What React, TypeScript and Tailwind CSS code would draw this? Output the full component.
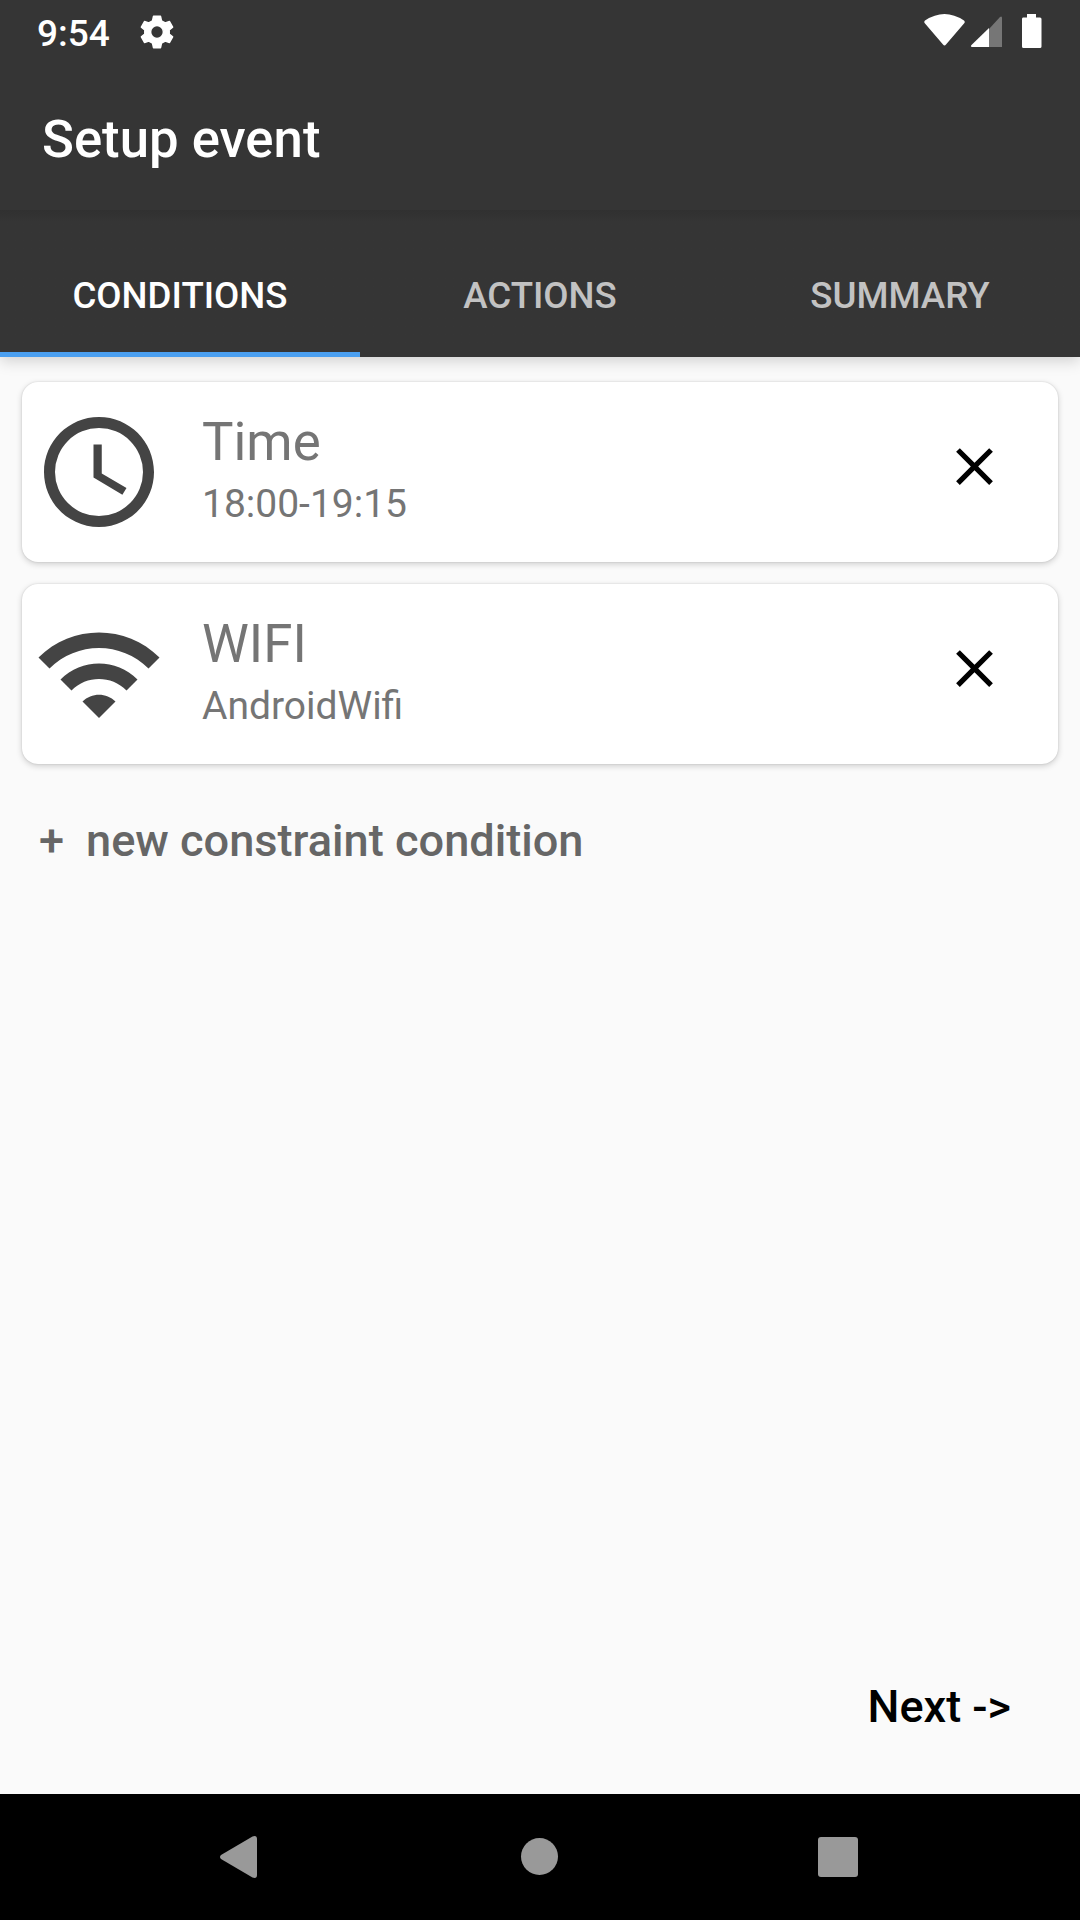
import React from "react";

function CloseIcon() {
  return (
    <svg className="mr-[52px] mt-[53px] size-[63px]" viewBox="0 0 24 24">
      <path d="M19 6.41L17.59 5 12 10.59 6.41 5 5 6.41 10.59 12 5 17.59 6.41 19 12 13.41 17.59 19 19 17.59 13.41 12z" fill="#000" />
    </svg>
  );
}

function Card({ title, detail, icon }: { title: string; detail: string; icon: React.ReactNode }) {
  return (
    <div className="flex h-[180px] items-start rounded-[16px] bg-white shadow-[0_2px_6px_rgba(0,0,0,0.18),0_0_2px_rgba(0,0,0,0.14)]">
      <div className="ml-[11px] mt-[24px] size-[132px] shrink-0">{icon}</div>
      <div className="ml-[37px] mt-[30px] flex-1 text-[#757575]">
        <div className="text-[52.8px] leading-[61px]">{title}</div>
        <div className="mt-[8px] text-[39px] leading-[46px]">{detail}</div>
      </div>
      <CloseIcon />
    </div>
  );
}

export default function App() {
  return (
    <div className="flex h-[1920px] w-[1080px] flex-col bg-[#fafafa] font-[Roboto,sans-serif]">
      <header className="h-[357px] bg-[#353535] text-white shadow-[0_4px_14px_rgba(0,0,0,0.17)]">
        <div className="flex h-[63px] items-center pl-[37px] pr-[38px]">
          <span className="pt-[3px] text-[37px] font-medium leading-[63px]">9:54</span>
          <svg className="ml-[30px] size-[34px]" viewBox="-17 -17 34 34" fill="#fff" stroke="#fff" strokeWidth="1.500" strokeLinejoin="round">
            <path fillRule="evenodd" d="M-3.500-15.700H3.500L4.500-11L8.200-9L12.500-10.500L15.600-4.800L12.200-2V2L15.600 4.800L12.500 10.500L8.200 9L4.500 11L3.500 15.700H-3.500L-4.500 11L-8.200 9L-12.500 10.500L-15.600 4.800L-12.200 2V-2L-15.600-4.800L-12.500-10.500L-8.200-9L-4.500-11ZM0-6.400A6.400 6.400 0 1 0 0 6.400A6.400 6.400 0 1 0 0-6.400Z" />
          </svg>
          <svg className="mb-px ml-auto h-[34px] w-[118px]" viewBox="0 0 118 34">
            <path d="M1 6.500Q20.500-6.500 40 6.500Q41.500 8 40 9.500L22 30.500Q20.500 32.500 19 30.500L1 9.500Q-.5 8 1 6.500Z" fill="#fff" />
            <path d="M65 15L76 3Q78 1.500 78 4V33H65Z" fill="#767676" />
            <path d="M65 14V33H48Q46 32.500 47.500 31Z" fill="#fff" />
            <path d="M99 3.500H103V0H112V3.500H116Q117.500 3.500 117.500 5V32.500Q117.500 34 116 34H99.500Q98 34 98 32.500V5Q98 3.500 99 3.500Z" fill="#fff" />
          </svg>
        </div>
        <div className="flex h-[147px] items-center pl-[42px] pt-[5px] text-[52.7px] font-medium leading-[78px]">Setup event</div>
        <nav className="grid h-[147px] grid-cols-3 bg-linear-to-b from-[#303030] to-[#353535] to-[12px] text-center text-[36.65px] font-medium">
          <div className="border-b-[5px] border-[#4a9ff0] pt-[59px]">CONDITIONS</div>
          <div className="pt-[59px] text-[#c2c2c2]">ACTIONS</div>
          <div className="pt-[59px] text-[#c2c2c2]">SUMMARY</div>
        </nav>
      </header>
      <main className="flex flex-1 flex-col px-[22px] pt-[25px]">
        <div className="flex flex-col gap-[22px]">
          <Card title="Time" detail="18:00-19:15" icon={
            <svg viewBox="0 0 24 24" fill="#444"><path d="M11.99 2C6.47 2 2 6.48 2 12s4.47 10 9.99 10C17.52 22 22 17.52 22 12S17.52 2 11.99 2zM12 20a8 8 0 1 1 0-16 8 8 0 0 1 0 16zm.5-13H11v6l5.25 3.15.75-1.23-4.5-2.67z" /></svg>
          } />
          <Card title="WIFI" detail="AndroidWifi" icon={
            <svg viewBox="0 0 24 24" fill="#444"><path d="M1 9l2 2c4.97-4.97 13.03-4.97 18 0l2-2C16.93 2.93 7.08 2.93 1 9zm8 8l3 3 3-3c-1.65-1.66-4.34-1.66-6 0zm-4-4l2 2c2.76-2.76 7.24-2.76 10 0l2-2C15.14 9.14 8.87 9.14 5 13z" /></svg>
          } />
        </div>
        <div className="mt-[50px] flex pl-[17px] text-[45.15px] font-medium leading-[53px] text-[#666]"><span className="w-[47px]">+</span><span>new constraint condition</span></div>
        <div className="mb-[61px] mr-[47px] mt-auto self-end text-[45px] font-medium leading-[53px] text-black">Next -&gt;</div>
      </main>
      <footer className="h-[126px] bg-black">
        <svg className="h-[126px] w-[1080px]" viewBox="0 0 1080 126" fill="#999">
          <path d="M221 61Q219 63 221 65L252.500 83.500Q257 85 257 81V45Q257 41 252.500 42.500Z" />
          <circle cx="539.5" cy="62.5" r="18.5" />
          <rect x="818" y="43" width="40" height="40" rx="3" />
        </svg>
      </footer>
    </div>
  );
}
